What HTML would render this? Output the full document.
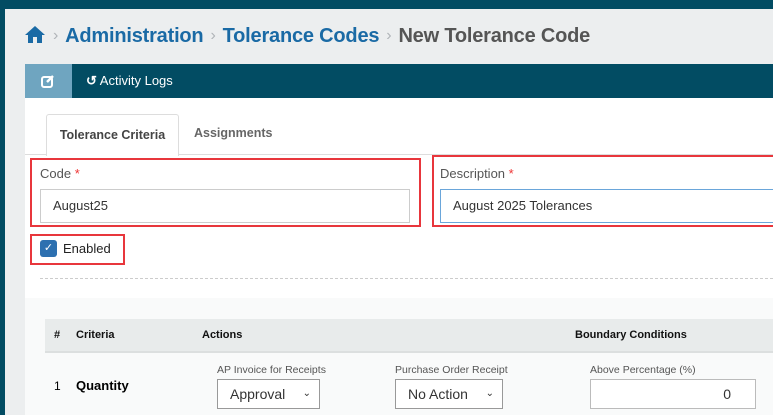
<!DOCTYPE html>
<html><head><style>
*{box-sizing:border-box;margin:0;padding:0}
body{width:773px;height:415px;overflow:hidden;background:#024c63;font-family:"Liberation Sans",sans-serif;position:relative}
.a{position:absolute}
.gray{left:5px;top:9px;width:768px;height:406px;background:#eceeef}
.bc{top:25px;left:24px;font-size:20px;font-weight:bold;color:#1a6aa5;white-space:nowrap;letter-spacing:-0.2px}
.bc .s{color:#b0b4b8;font-weight:normal;font-size:16px;margin:0 7px;position:relative;top:-2px}
.bc .last{color:#555}
.tb{left:25px;top:64px;width:748px;height:35px;background:#024c63}
.edit{left:25px;top:64px;width:47px;height:35px;background:#6fa5c0}
.panel{left:25px;top:98px;width:748px;height:317px;background:#fff}
.tab{top:114px;left:46px;width:133px;height:42px;border:1px solid #ddd;border-bottom:none;background:#fff;font-size:12.5px;font-weight:bold;color:#444;text-align:center;line-height:40px;border-radius:3px 3px 0 0}
.red{border:2px solid #e8363c}
.lbl{font-size:13px;color:#555}
.inp{border:1px solid #ccc;height:34px;font-size:13px;color:#333;line-height:32px;padding-left:12px}
.th{font-size:11px;font-weight:bold;color:#111}
.sel{border:1px solid #999;height:30px;font-size:14px;color:#333;line-height:28px;padding-left:12px;background:#fff}
.sl{font-size:10.5px;color:#555}
</style></head><body>
<div class="a gray"></div>
<div class="a bc"><svg width="22" height="18" viewBox="0 0 22 18" style="vertical-align:-1px"><path d="M11 1 L1 10 L4 10 L4 18 L9 18 L9 12 L13 12 L13 18 L18 18 L18 10 L21 10 Z" fill="#1a6aa5"/></svg><span class="s">›</span>Administration<span class="s">›</span>Tolerance Codes<span class="s">›</span><span class="last">New Tolerance Code</span></div>
<div class="a tb"></div>
<div class="a edit"><svg class="a" style="left:16px;top:10px" width="14" height="14" viewBox="0 0 14 14"><rect x="1" y="3" width="10" height="10" rx="2" fill="none" stroke="#fff" stroke-width="2"/><path d="M6 8 L12 2" stroke="#fff" stroke-width="2.5"/></svg></div>
<div class="a" style="left:86px;top:73px;color:#fff;font-size:13px"><span style="font-weight:bold">↺</span> Activity Logs</div>
<div class="a panel"></div>
<div class="a" style="left:25px;top:154px;width:748px;border-top:1px solid #ddd"></div>
<div class="a tab">Tolerance Criteria</div>
<div class="a" style="left:194px;top:126px;font-size:12.5px;font-weight:bold;color:#666">Assignments</div>
<div class="a red" style="left:30px;top:158px;width:391px;height:69px"></div>
<div class="a lbl" style="left:40px;top:166px">Code <span style="color:#e33">*</span></div>
<div class="a inp" style="left:40px;top:189px;width:370px">August25</div>
<div class="a red" style="left:432px;top:155px;width:345px;height:72px"></div>
<div class="a lbl" style="left:440px;top:166px">Description <span style="color:#e33">*</span></div>
<div class="a inp" style="left:440px;top:189px;width:340px;border-color:#6aa6da">August 2025 Tolerances</div>
<div class="a red" style="left:30px;top:234px;width:95px;height:31px"></div>
<div class="a" style="left:40px;top:240px;width:17px;height:17px;background:#2d70b0;border-radius:3px;color:#fff;font-size:11px;text-align:center;line-height:17px">✓</div>
<div class="a" style="left:63px;top:241px;font-size:13px;color:#222">Enabled</div>
<div class="a" style="left:40px;top:278px;width:733px;border-top:1px dashed #ccc"></div>
<div class="a" style="left:25px;top:298px;width:748px;height:117px;background:#f9fafa"></div>
<div class="a" style="left:45px;top:319px;width:728px;height:34px;background:#e8ebeb;border-bottom:2px solid #dcdfdf"></div>
<div class="a th" style="left:54px;top:329px">#</div>
<div class="a th" style="left:76px;top:329px">Criteria</div>
<div class="a th" style="left:202px;top:329px">Actions</div>
<div class="a th" style="left:575px;top:329px">Boundary Conditions</div>
<div class="a" style="left:54px;top:379px;font-size:12px">1</div>
<div class="a" style="left:76px;top:378px;font-size:13px;font-weight:bold">Quantity</div>
<div class="a sl" style="left:217px;top:364px">AP Invoice for Receipts</div>
<div class="a sel" style="left:217px;top:379px;width:103px">Approval<span style="position:absolute;right:8px;font-size:10px">⌄</span></div>
<div class="a sl" style="left:395px;top:364px">Purchase Order Receipt</div>
<div class="a sel" style="left:395px;top:379px;width:108px">No Action<span style="position:absolute;right:8px;font-size:10px">⌄</span></div>
<div class="a sl" style="left:590px;top:364px">Above Percentage (%)</div>
<div class="a sel" style="left:590px;top:379px;width:166px;border-color:#bbb;text-align:right;padding-right:24px">0</div>
</body></html>
